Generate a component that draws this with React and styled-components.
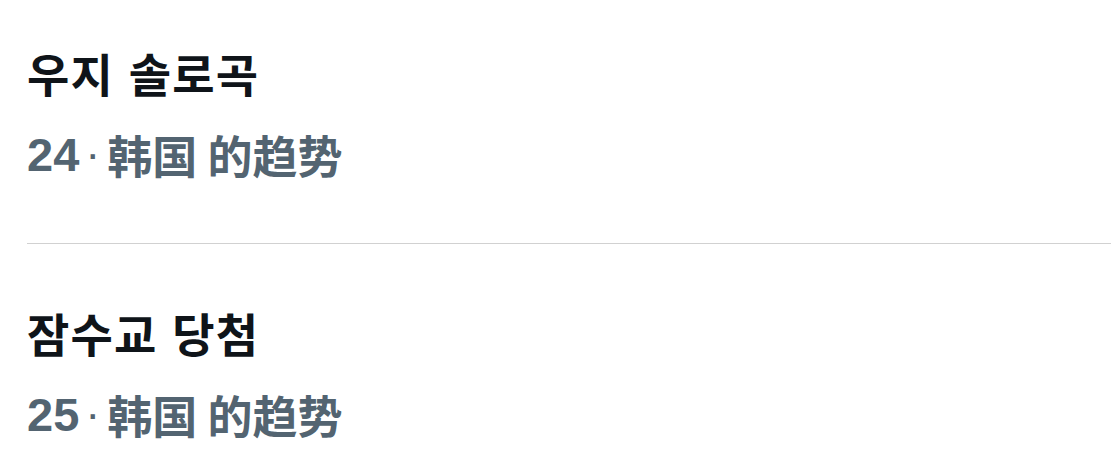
import React from "react";
import styled, { createGlobalStyle } from "styled-components";

const GlobalStyle = createGlobalStyle`
  body {
    margin: 0;
    background: #ffffff;
    font-family: "Noto Sans CJK KR", "Noto Sans CJK SC", "Liberation Sans", sans-serif;
  }
`;

const trends = [
  { rank: 24, title: "우지 솔로곡", place: "韩国 的趋势" },
  { rank: 25, title: "잠수교 당첨", place: "韩国 的趋势" },
];

const TrendList = () => {
  return (
    <StList>
      {trends.map((t, i) => (
        <StItem key={t.rank} $first={i === 0}>
          <StTitle>{t.title}</StTitle>
          <StMeta>
            <StRank>{t.rank}</StRank>
            <StDot>·</StDot>
            <StPlace>{t.place}</StPlace>
          </StMeta>
        </StItem>
      ))}
    </StList>
  );
};

const StList = styled.div`
  padding-left: 27px;
  width: 1111px;
  box-sizing: border-box;
  overflow: hidden;
  height: 476px;
`;

const StItem = styled.div`
  display: flex;
  flex-direction: column;
  gap: 22px;
  padding-top: ${(p) => (p.$first ? "42px" : "58px")};
  padding-bottom: 59px;
  border-bottom: 1px solid #d1d1d1;
`;

const StTitle = styled.div`
  height: 60px;
  display: flex;
  align-items: center;
  font-size: 46px;
  font-weight: 700;
  color: #0f1419;
  letter-spacing: 1.2px;
  word-spacing: 3px;
  font-family: "Noto Sans CJK KR", sans-serif;
`;

const StMeta = styled.div`
  height: 60px;
  display: flex;
  align-items: center;
  font-size: 45px;
  font-weight: 700;
  color: #536471;
`;

const StRank = styled.span`
  font-family: "Liberation Sans", sans-serif;
  font-size: 47px;
`;

const StDot = styled.span`
  font-family: "Liberation Sans", sans-serif;
  margin: 0 7px 0 6px;
  font-weight: 400;
`;

const StPlace = styled.span`
  font-family: "Noto Sans CJK SC", sans-serif;
  letter-spacing: 0;
`;

export default function App() {
  return (
    <>
      <GlobalStyle />
      <TrendList />
    </>
  );
}
